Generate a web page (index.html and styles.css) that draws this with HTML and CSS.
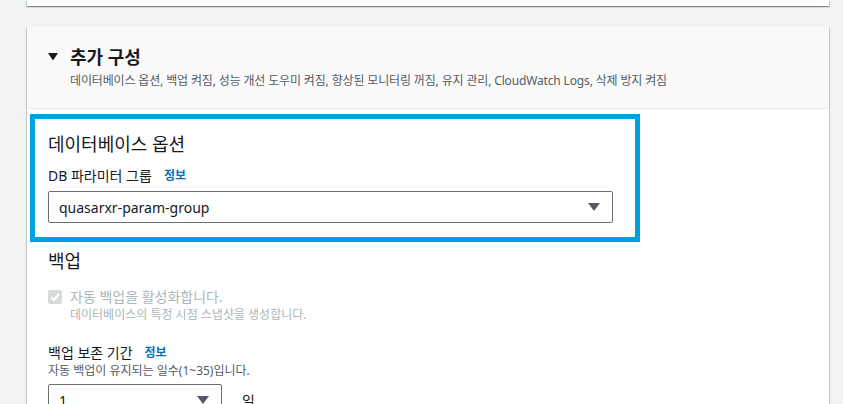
FILE: index.html
```html
<!DOCTYPE html>
<html lang="ko">
<head>
<meta charset="utf-8">
<link rel="stylesheet" href="styles.css">
</head>
<body>
<div class="page">
  <div class="card-stub"></div>
  <section class="card">
    <header class="card-head">
      <h2 class="expander">
        <svg class="caret" width="10" height="8" viewBox="0 0 10 8"><path d="M0 0H10L5 7.5Z" fill="#16191f"/></svg>
        <span>추가 구성</span>
      </h2>
      <p class="desc">데이터베이스 옵션, 백업 켜짐, 성능 개선 도우미 켜짐, 향상된 모니터링 꺼짐, 유지 관리, CloudWatch Logs, 삭제 방지 켜짐</p>
    </header>
    <div class="card-body">
      <div class="highlight">
        <h3 class="sec-title">데이터베이스 옵션</h3>
        <div class="label">DB 파라미터 그룹 <a class="info">정보</a></div>
        <div class="select wide">
          <span>quasarxr-param-group</span>
          <svg width="12" height="8" viewBox="0 0 12 8"><path d="M0 0H12L6 8Z" fill="#545b64"/></svg>
        </div>
      </div>
      <div class="section">
        <h3 class="sec-title">백업</h3>
        <div class="checkrow">
          <span class="checkbox"><svg width="14" height="14" viewBox="0 0 14 14"><path d="M3.2 7.2L6 10L11 4" fill="none" stroke="#fff" stroke-width="2"/></svg></span>
          <div class="checktext">
            <div class="check-label">자동 백업을 활성화합니다.</div>
            <div class="check-desc">데이터베이스의 특정 시점 스냅샷을 생성합니다.</div>
          </div>
        </div>
        <div class="field">
          <div class="label">백업 보존 기간 <a class="info">정보</a></div>
          <div class="hint">자동 백업이 유지되는 일수(1~35)입니다.</div>
          <div class="inline">
            <div class="select narrow">
              <span>1</span>
              <svg width="12" height="8" viewBox="0 0 12 8"><path d="M0 0H12L6 8Z" fill="#545b64"/></svg>
            </div>
            <span class="unit">일</span>
          </div>
        </div>
      </div>
    </div>
  </section>
</div>
</body>
</html>
```

FILE: styles.css
```css
* { box-sizing: border-box; }
html, body { margin: 0; padding: 0; }
body {
  background: #f2f3f3;
  font-family: "Noto Sans", "Noto Sans CJK KR", sans-serif;
  color: #16191f;
  overflow: hidden;
  height: 404px;
}
.page {
  padding: 0 14px 0 27px;
}
.card-stub {
  height: 6px;
  background: #fff;
  box-shadow: 0 1px 1px 0 rgba(0,28,36,.3), 1px 1px 1px 0 rgba(0,28,36,.15), -1px 1px 1px 0 rgba(0,28,36,.15);
}
.card {
  margin-top: 21px;
  background: #fff;
  box-shadow: 0 1px 1px 0 rgba(0,28,36,.3), 1px 1px 1px 0 rgba(0,28,36,.15), -1px 1px 1px 0 rgba(0,28,36,.15);
  height: 500px;
}
.card-head {
  background: #fafafa;
  border-bottom: 1px solid #eaeded;
  padding: 19px 20px 19px 21px;
}
.expander {
  margin: 0;
  display: flex;
  align-items: center;
  gap: 12px;
  font-size: 18px;
  line-height: 22px;
  font-weight: 700;
}
.caret { display: block; }
.desc {
  margin: 5px 0 0 22px;
  font-size: 12px;
  line-height: 16px;
  color: #545b64;
  letter-spacing: -0.15px;
}
.card-body {
  padding-top: 5px;
}
.highlight {
  margin-left: 3px;
  width: 610px;
  border: 5px solid #00a1e4;
  padding: 14px 22px 14px 13px;
}
.sec-title {
  margin: 0;
  font-size: 18px;
  line-height: 22px;
  font-weight: 400;
}
.label {
  margin-top: 11px;
  font-size: 14px;
  line-height: 20px;
  display: flex;
  align-items: center;
  gap: 12px;
}
.info {
  color: #0073bb;
  font-size: 12px;
  font-weight: 700;
}
.select {
  margin-top: 5px;
  height: 32px;
  border: 1px solid #687078;
  border-radius: 2px;
  display: flex;
  align-items: center;
  justify-content: space-between;
  padding: 0 12px 0 10px;
  font-size: 14px;
  background: #fff;
}
.select svg { display: block; }
.section {
  padding: 8px 0 0 21px;
}
.checkrow {
  margin-top: 15px;
  display: flex;
  gap: 8px;
}
.checkbox {
  width: 14px;
  height: 14px;
  margin-top: 3px;
  background: #d5dbdb;
  border-radius: 2px;
  display: block;
}
.checkbox svg { display: block; }
.check-label {
  font-size: 14px;
  line-height: 20px;
  color: #aab7b8;
}
.check-desc {
  font-size: 12px;
  line-height: 16px;
  color: #aab7b8;
}
.field {
  margin-top: 20px;
}
.field .label { margin-top: 0; }
.hint {
  font-size: 12px;
  line-height: 16px;
  color: #545b64;
}
.inline {
  display: flex;
  align-items: center;
  gap: 20px;
}
.select.narrow {
  width: 174px;
  margin-top: 5px;
}
.unit {
  font-size: 14px;
  margin-top: 5px;
}
```
